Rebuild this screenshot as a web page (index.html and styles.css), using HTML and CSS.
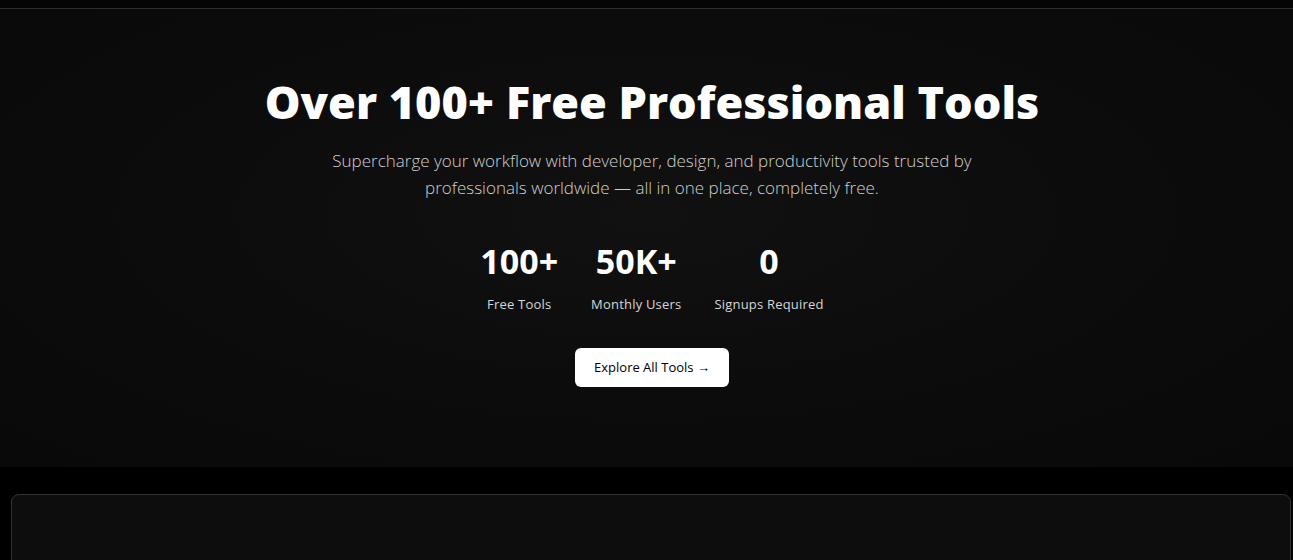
FILE: index.html
```html
<!DOCTYPE html>
<html lang="en">
<head>
<meta charset="utf-8">
<title>Free Professional Tools</title>
<link rel="stylesheet" href="styles.css">
</head>
<body>
<div class="topbar"></div>
<section class="hero">
  <h1 class="hero-title">Over 100+ Free Professional Tools</h1>
  <p class="hero-sub">Supercharge your workflow with developer, design, and productivity tools trusted by professionals worldwide — all in one place, completely free.</p>
  <div class="stats">
    <div class="stat stat-a"><div class="stat-num">100+</div><div class="stat-label">Free Tools</div></div>
    <div class="stat"><div class="stat-num">50K+</div><div class="stat-label">Monthly Users</div></div>
    <div class="stat"><div class="stat-num">0</div><div class="stat-label">Signups Required</div></div>
  </div>
  <a class="cta" href="#">Explore All Tools →</a>
</section>
<main class="content">
  <div class="card"></div>
</main>
</body>
</html>
```
FILE: styles.css
```css
* { box-sizing: border-box; }
html, body { margin: 0; padding: 0; background: #000; }
body { font-family: "Open Sans", "Noto Sans", sans-serif; color: #fff; height: 560px; overflow: hidden; }
.topbar { height: 9px; background: #050505; border-bottom: 1px solid #2e2e2e; }
.hero {
  height: 458px;
  background: radial-gradient(ellipse at 50% 45%, #111 0%, #0c0c0c 50%, #090909 100%);
  display: flex; flex-direction: column; align-items: center;
  padding: 63px 0 0 11px;
  text-align: center;
}
.hero-title { margin: 0; font-size: 45px; font-weight: 800; line-height: 60px; letter-spacing: 0; }
.hero-sub { margin: 15px 0 0; width: 690px; font-size: 17px; font-weight: 300; line-height: 27px; color: #cfcfcf; }
.stats { display: flex; gap: 33px; margin-top: 40px; }
.stat { display: flex; flex-direction: column; align-items: center; }
.stat-a { min-width: 77px; }
.stat-num { font-size: 34px; font-weight: 700; line-height: 40px; }
.stat-label { font-size: 13px; color: #d6d6d6; margin-top: 14px; line-height: 18px; letter-spacing: 0.2px; }
.cta {
  margin-top: 35px; display: inline-block; background: #fff; color: #000; text-decoration: none;
  font-size: 13px; line-height: 17px; padding: 11px 19px; border-radius: 6px;
}
.content { padding: 27px 2px 0 11px; }
.card { height: 120px; background: #0d0d0d; border: 1px solid #333; border-radius: 8px; }
```
